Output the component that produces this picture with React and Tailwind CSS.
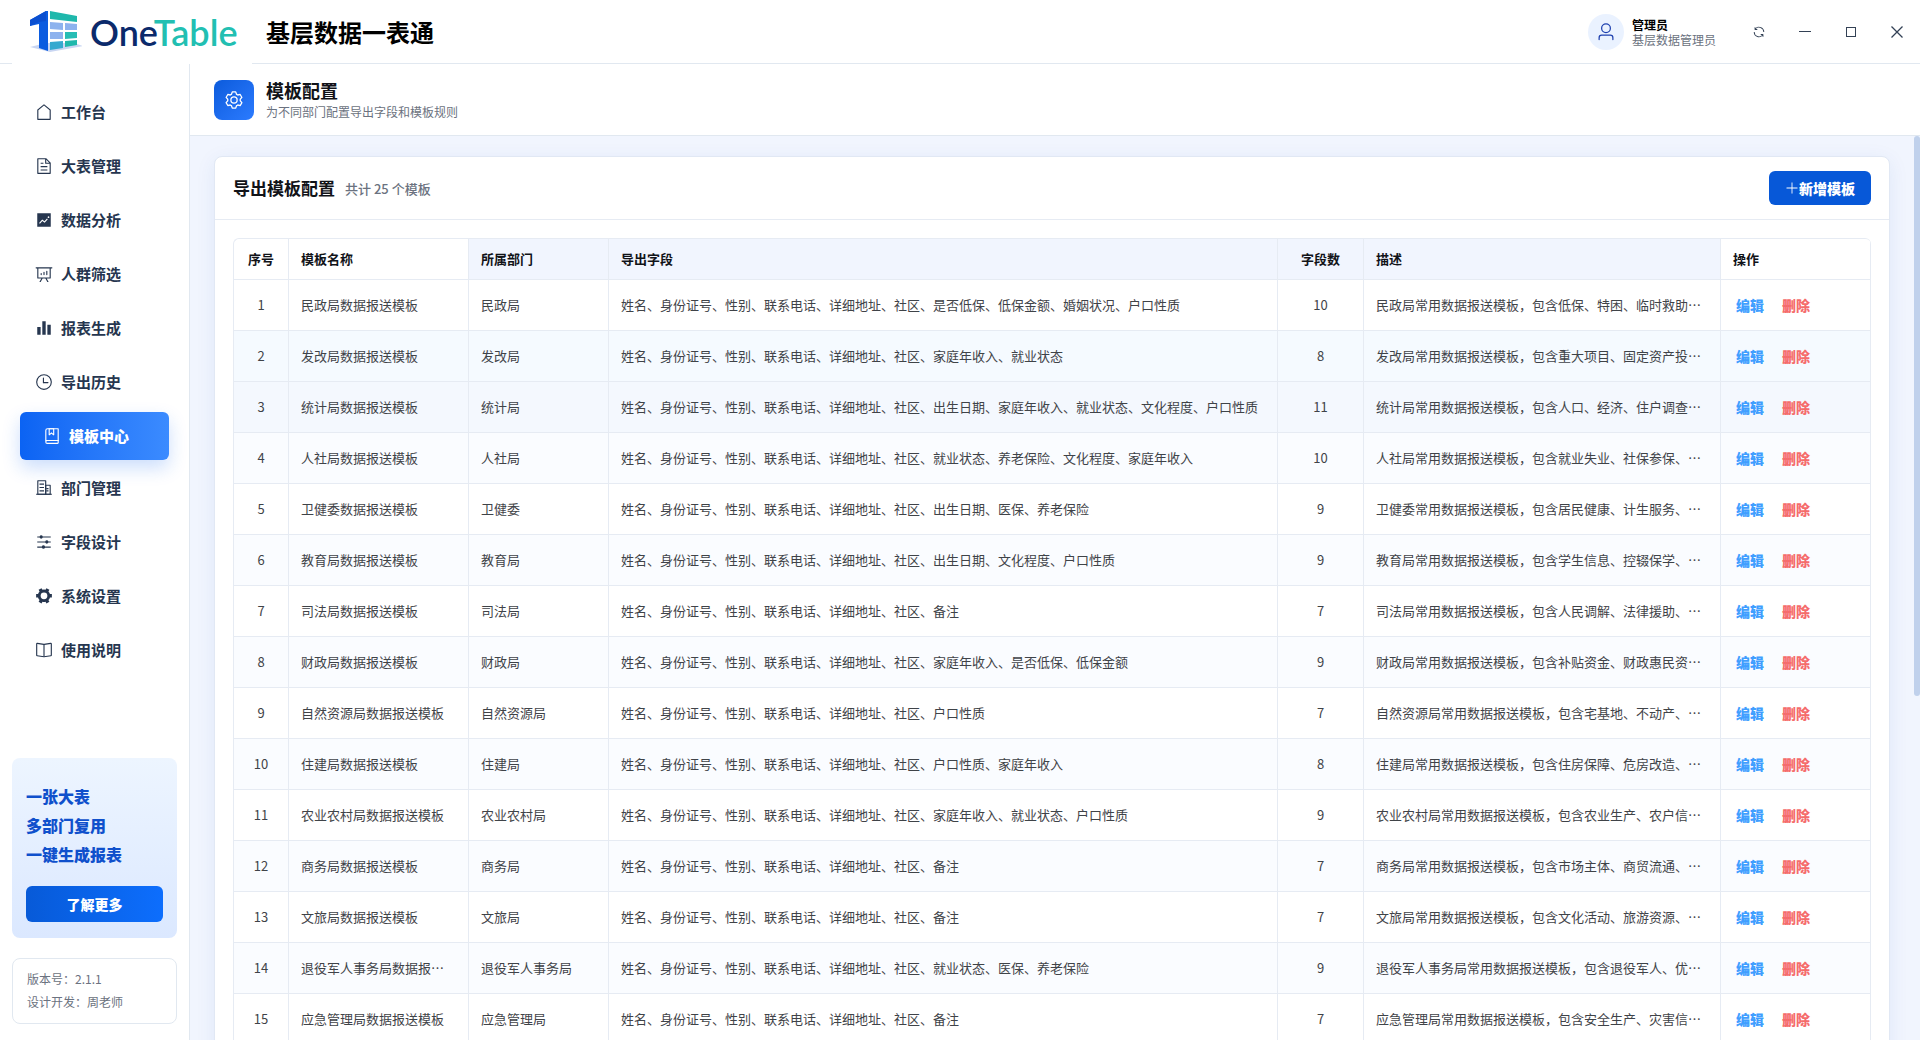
import { useState } from "react";

const icons = {
  house: [
    "M192 413.952V896h640V413.952L512 147.328zM139.52 374.4l352-293.312a32 32 0 0 1 40.96 0l352 293.312A32 32 0 0 1 896 398.976V928a32 32 0 0 1-32 32H160a32 32 0 0 1-32-32V398.976a32 32 0 0 1 11.52-24.576z",
  ],
  document: [
    "M832 384H576V128H192v768h640zm-26.496-64L640 154.496V320zM160 64h480l256 256v608a32 32 0 0 1-32 32H160a32 32 0 0 1-32-32V96a32 32 0 0 1 32-32m160 448h384v64H320zm0-192h160v64H320zm0 384h384v64H320z",
  ],
  trend: [
    "M128 896V128h768v768zm291.712-327.296 128 102.4 180.16-201.792-47.744-42.624-139.84 156.608-128-102.4-180.16 201.792 47.744 42.624 139.84-156.608zM816 352a48 48 0 1 0-96 0 48 48 0 0 0 96 0",
  ],
  board: [
    "m665.216 768 110.848 192h-73.856L591.36 768H433.024L322.176 960H248.32l110.848-192H160a32 32 0 0 1-32-32V192H64a32 32 0 0 1 0-64h896a32 32 0 1 1 0 64h-64v544a32 32 0 0 1-32 32zM832 192H192v512h640zM352 448a32 32 0 0 1 32 32v64a32 32 0 0 1-64 0v-64a32 32 0 0 1 32-32m160-64a32 32 0 0 1 32 32v128a32 32 0 0 1-64 0V416a32 32 0 0 1 32-32m160-64a32 32 0 0 1 32 32v192a32 32 0 1 1-64 0V352a32 32 0 0 1 32-32",
  ],
  histogram: ["M416 896V128h192v768zm-288 0V448h192v448zm576 0V320h192v576z"],
  clock: [
    "M512 896a384 384 0 1 0 0-768 384 384 0 0 0 0 768m0 64a448 448 0 1 1 0-896 448 448 0 0 1 0 896",
    "M480 256a32 32 0 0 1 32 32v256a32 32 0 0 1-64 0V288a32 32 0 0 1 32-32",
    "M480 512h256q32 0 32 32t-32 32H480q-32 0-32-32t32-32",
  ],
  collection: [
    "M192 736h640V128H256a64 64 0 0 0-64 64zm64-672h608a32 32 0 0 1 32 32v672a32 32 0 0 1-32 32H160l-32 57.536V192A128 128 0 0 1 256 64",
    "M240 800a48 48 0 1 0 0 96h592v-96zm0-64h656v160a64 64 0 0 1-64 64H240a112 112 0 0 1 0-224m144-608v250.88l96-76.8 96 76.8V128zm-64-64h320v381.44a32 32 0 0 1-51.968 24.96L480 384l-108.032 86.4A32 32 0 0 1 320 445.44z",
  ],
  office: [
    "M192 128v704h384V128zm-32-64h448a32 32 0 0 1 32 32v768a32 32 0 0 1-32 32H160a32 32 0 0 1-32-32V96a32 32 0 0 1 32-32",
    "M256 256h256v64H256zm0 192h256v64H256zm0 192h256v64H256zm384-128h128v64H640zm0 128h128v64H640zM64 832h896v64H64z",
    "M640 384v448h192V384zm-32-64h256a32 32 0 0 1 32 32v512a32 32 0 0 1-32 32H608a32 32 0 0 1-32-32V352a32 32 0 0 1 32-32",
  ],
  operation: [
    "M389.44 768a96.064 96.064 0 0 1 181.12 0H896v64H570.56a96.064 96.064 0 0 1-181.12 0H128v-64zm192-288a96.064 96.064 0 0 1 181.12 0H896v64H762.56a96.064 96.064 0 0 1-181.12 0H128v-64zm-320-288a96.064 96.064 0 0 1 181.12 0H896v64H442.56a96.064 96.064 0 0 1-181.12 0H128v-64z",
  ],
  tools: [
    "M764.416 254.72a351.68 351.68 0 0 1 86.336 149.184H960v192.064H850.752a351.68 351.68 0 0 1-86.336 149.312l54.72 94.72-166.272 96-54.592-94.72a352.64 352.64 0 0 1-172.48 0L371.136 936l-166.272-96 54.72-94.72a351.68 351.68 0 0 1-86.336-149.312H64v-192h109.248a351.68 351.68 0 0 1 86.336-149.312L204.8 160l166.208-96h.192l54.656 94.592a352.64 352.64 0 0 1 172.48 0L652.8 64h.128L819.2 160l-54.72 94.72zM704 499.968a192 192 0 1 0-384 0 192 192 0 0 0 384 0",
  ],
  reading: [
    "m512 863.36 384-54.848v-638.72L525.568 222.72a96 96 0 0 1-27.136 0L128 169.792v638.72zM137.024 106.432l370.432 52.928a32 32 0 0 0 9.088 0l370.432-52.928A64 64 0 0 1 960 169.792v638.72a64 64 0 0 1-54.976 63.36l-388.48 55.488a32 32 0 0 1-9.088 0l-388.48-55.488A64 64 0 0 1 64 808.512v-638.72a64 64 0 0 1 73.024-63.36",
    "M480 192h64v704h-64z",
  ],
  setting: [
    "M600.704 64a32 32 0 0 1 30.464 22.208l35.2 109.376c14.784 7.232 28.928 15.36 42.432 24.512l112.384-24.192a32 32 0 0 1 34.432 15.36L944.32 364.8a32 32 0 0 1-4.032 37.504l-77.12 85.12a357.12 357.12 0 0 1 0 49.024l77.12 85.248a32 32 0 0 1 4.032 37.504l-88.704 153.6a32 32 0 0 1-34.432 15.296L708.8 803.904c-13.44 9.088-27.648 17.28-42.368 24.512l-35.264 109.376A32 32 0 0 1 600.704 960H423.296a32 32 0 0 1-30.464-22.208L357.696 828.48a351.616 351.616 0 0 1-42.56-24.64l-112.32 24.256a32 32 0 0 1-34.432-15.36L79.68 659.2a32 32 0 0 1 4.032-37.504l77.12-85.248a357.12 357.12 0 0 1 0-48.896l-77.12-85.248A32 32 0 0 1 79.68 364.8l88.704-153.6a32 32 0 0 1 34.432-15.296l112.32 24.256c13.568-9.152 27.776-17.408 42.56-24.64l35.2-109.312A32 32 0 0 1 423.232 64H600.64zm-23.424 64H446.72l-36.352 113.088-24.512 11.968a294.113 294.113 0 0 0-34.816 20.096l-22.656 15.36-116.224-25.088-65.28 113.152 79.68 88.192-1.92 27.136a293.12 293.12 0 0 0 0 40.192l1.92 27.136-79.808 88.192 65.344 113.152 116.224-25.024 22.656 15.296a294.113 294.113 0 0 0 34.816 20.096l24.512 11.968L446.72 896h130.688l36.48-113.152 24.448-11.904a288.282 288.282 0 0 0 34.752-20.096l22.592-15.296 116.288 25.024 65.28-113.152-79.744-88.192 1.92-27.136a293.12 293.12 0 0 0 0-40.256l-1.92-27.136 79.808-88.128-65.344-113.152-116.288 24.96-22.592-15.232a287.616 287.616 0 0 0-34.752-20.096l-24.448-11.904L577.344 128zM512 320a192 192 0 1 1 0 384 192 192 0 0 1 0-384m0 64a128 128 0 1 0 0 256 128 128 0 0 0 0-256",
  ],
  user: [
    "M512 512a192 192 0 1 0 0-384 192 192 0 0 0 0 384m0 64a256 256 0 1 1 0-512 256 256 0 0 1 0 512m320 320v-96a96 96 0 0 0-96-96H288a96 96 0 0 0-96 96v96a32 32 0 1 1-64 0v-96a160 160 0 0 1 160-160h448a160 160 0 0 1 160 160v96a32 32 0 1 1-64 0",
  ],
  refresh: [
    "M771.776 794.88A384 384 0 0 1 128 512h64a320 320 0 0 0 555.712 216.448H654.72a32 32 0 1 1 0-64h149.056a32 32 0 0 1 32 32v148.928a32 32 0 1 1-64 0v-50.56zM276.288 295.616h92.992a32 32 0 0 1 0 64H220.16a32 32 0 0 1-32-32V178.56a32 32 0 0 1 64 0v50.56A384 384 0 0 1 896.128 512h-64a320 320 0 0 0-555.776-216.384z",
  ],
  plus: [
    "M480 480V128a32 32 0 0 1 64 0v352h352a32 32 0 1 1 0 64H544v352a32 32 0 1 1-64 0V544H128a32 32 0 0 1 0-64z",
  ],
};

const menu = [
  { name: "工作台", icon: "house" },
  { name: "大表管理", icon: "document" },
  { name: "数据分析", icon: "trend" },
  { name: "人群筛选", icon: "board" },
  { name: "报表生成", icon: "histogram" },
  { name: "导出历史", icon: "clock" },
  { name: "模板中心", icon: "collection" },
  { name: "部门管理", icon: "office" },
  { name: "字段设计", icon: "operation" },
  { name: "系统设置", icon: "tools" },
  { name: "使用说明", icon: "reading" },
];

const baseFields = "姓名、身份证号、性别、联系电话、详细地址、社区、";

// dept, extra fields, field count, what the description lists
const templates = [
  ["民政局", "是否低保、低保金额、婚姻状况、户口性质", 10, "低保、特困、临时救助信息"],
  ["发改局", "家庭年收入、就业状态", 8, "重大项目、固定资产投资等"],
  ["统计局", "出生日期、家庭年收入、就业状态、文化程度、户口性质", 11, "人口、经济、住户调查数据"],
  ["人社局", "就业状态、养老保险、文化程度、家庭年收入", 10, "就业失业、社保参保、培训"],
  ["卫健委", "出生日期、医保、养老保险", 9, "居民健康、计生服务、慢病"],
  ["教育局", "出生日期、文化程度、户口性质", 9, "学生信息、控辍保学、资助"],
  ["司法局", "备注", 7, "人民调解、法律援助、矫正"],
  ["财政局", "家庭年收入、是否低保、低保金额", 9, "补贴资金、财政惠民资金等"],
  ["自然资源局", "户口性质", 7, "宅基地、不动产、耕地"],
  ["住建局", "户口性质、家庭年收入", 8, "住房保障、危房改造、物业"],
  ["农业农村局", "家庭年收入、就业状态、户口性质", 9, "农业生产、农户信息等"],
  ["商务局", "备注", 7, "市场主体、商贸流通、电商"],
  ["文旅局", "备注", 7, "文化活动、旅游资源、文物"],
  ["退役军人事务局", "就业状态、医保、养老保险", 9, "退役军人、优抚对象"],
  ["应急管理局", "备注", 7, "安全生产、灾害信息等"],
];

const Icon = ({ name, className }) => (
  <svg viewBox="0 0 1024 1024" fill="currentColor" className={className} aria-hidden="true">
    {icons[name].map((d) => (
      <path key={d} d={d} />
    ))}
  </svg>
);

const Logo = () => (
  <div className="relative z-10 -mb-px ml-3 flex h-16 w-60 items-center bg-white pl-4">
    <svg viewBox="0 0 54 44" className="h-11 w-[54px]" aria-hidden="true">
      <path d="M2 37 18 33H46L55 36 22 42z" fill="#c9d6f2" />
      <path d="M2 10 18 1 20 1V41L11 38V14L2 16z" fill="#0b5ce0" />
      <path d="M2 10 18 1V11L11 12 2 16z" fill="#0a4fd0" />
      <path d="M22 1 49 6V12L22 9z" fill="#1fb8ac" />
      <path d="M22 12 35 13V20L22 19z" fill="#8db2ee" />
      <path d="M37 13 49 14V20H37z" fill="#8db2ee" />
      <path d="M22 22H35V29H22z" fill="#8db2ee" />
      <path d="M37 22H49V28L37 29z" fill="#27bdb4" />
      <path d="M22 32 35 31V38L22 40z" fill="#35a9cf" />
      <path d="M37 31 49 30V35L37 37z" fill="#1fb8ac" />
    </svg>
    <span className="ml-2 font-['Lato',sans-serif] text-[36px] leading-none font-semibold text-[#0b2a6b]">
      One<span className="text-[#22bfb2]">Table</span>
    </span>
  </div>
);

const TopBar = () => (
  <header className="flex h-16 shrink-0 items-center border-b border-[#e1e8f0] bg-white">
    <Logo />
    <h1 className="ml-3.5 text-2xl font-bold text-black">基层数据一表通</h1>
    <div className="ml-auto flex items-center">
      <span className="flex size-9 items-center justify-center rounded-full bg-[#eaf2ff] text-[#1e40af]">
        <Icon name="user" className="size-5" />
      </span>
      <div className="mr-5 ml-2 text-xs leading-[15px]">
        <div className="font-bold text-black">管理员</div>
        <div className="text-[#6b7280]">基层数据管理员</div>
      </div>
      <button aria-label="刷新" className="flex h-8 w-[46px] items-center justify-center text-[#334155]">
        <Icon name="refresh" className="size-3.5" />
      </button>
      <button aria-label="最小化" className="flex h-8 w-[46px] items-center justify-center">
        <span className="h-px w-3 bg-[#334155]" />
      </button>
      <button aria-label="最大化" className="flex h-8 w-[46px] items-center justify-center">
        <span className="size-2.5 border border-[#334155]" />
      </button>
      <button aria-label="关闭" className="flex h-8 w-[46px] items-center justify-center text-[#334155]">
        <svg viewBox="0 0 12 12" className="size-3" stroke="currentColor" strokeWidth="1.3" aria-hidden="true">
          <path d="M.5.5l11 11M11.5.5l-11 11" />
        </svg>
      </button>
    </div>
  </header>
);

const Sidebar = ({ current, onSelect }) => (
  <aside className="flex w-[190px] shrink-0 flex-col border-r border-[#e1e8f0] bg-white pb-4">
    <nav className="flex flex-col pt-[21px]">
      {menu.map((item) => (
        <a
          key={item.name}
          href="#"
          onClick={() => onSelect(item.name)}
          className={
            item.name === current
              ? "mx-5 mt-[3px] mb-px flex h-12 items-center rounded-md bg-linear-to-r from-[#0b63f3] to-[#3b8bff] pl-5 text-[15px] font-black text-white shadow-[0_8px_18px_rgba(22,104,240,0.22)]"
              : "mx-5 flex h-[54px] items-center pl-3 text-[15px] font-bold text-[#26364f]"
          }
        >
          <span className="mr-[5px] flex w-6 justify-center">
            <Icon name={item.icon} className="size-[18px]" />
          </span>
          {item.name}
        </a>
      ))}
    </nav>
    <div className="mx-3 mt-auto rounded-lg bg-linear-to-b from-[#edf5ff] to-[#dbe8ff] px-3.5 pt-6 pb-4">
      <p className="text-base leading-[29px] font-black text-[#0f50cc]">
        一张大表
        <br />
        多部门复用
        <br />
        一键生成报表
      </p>
      <button className="mt-[17px] h-9 w-full rounded-md bg-linear-to-r from-[#075ad8] to-[#0d6efd] text-sm font-black text-white">
        了解更多
      </button>
    </div>
    <div className="mx-3 mt-5 rounded-lg border border-[#e1e8f0] px-3.5 pt-2 pb-2.5 text-xs leading-[23px] text-[#6b7280]">
      <div>版本号：2.1.1</div>
      <div>设计开发：周老师</div>
    </div>
  </aside>
);

const rowColor = (i) => {
  if (i === 1) return "bg-[#f5faff]";
  if (i === 2) return "bg-[#f4f8fe]";
  return i % 2 ? "bg-[#fafcff]" : "bg-white";
};

const th = "border-r border-b border-[#e6ebf3] px-3 text-left font-bold";
const td = "truncate border-r border-b border-[#e6ebf3] px-3";

const TemplateTable = () => (
  <div className="overflow-hidden rounded-md border-t border-l border-[#e6ebf3]">
    <table className="w-full table-fixed border-separate border-spacing-0 text-[13px] text-[#3f4348]">
      <colgroup>
        <col className="w-[55px]" />
        <col className="w-[180px]" />
        <col className="w-[140px]" />
        <col />
        <col className="w-[86px]" />
        <col className="w-[357px]" />
        <col className="w-[150px]" />
      </colgroup>
      <thead>
        <tr className="h-[41px] text-[#111318]">
          <th className="border-r border-b border-[#e6ebf3] text-center font-bold">序号</th>
          <th className={th}>模板名称</th>
          <th className={`${th} bg-[#f1f5fe]`}>所属部门</th>
          <th className={`${th} bg-[#f1f5fe]`}>导出字段</th>
          <th className="border-r border-b border-[#e6ebf3] bg-[#f1f5fe] text-center font-bold">字段数</th>
          <th className={`${th} bg-[#f1f5fe]`}>描述</th>
          <th className={th}>操作</th>
        </tr>
      </thead>
      <tbody>
        {templates.map(([dept, fields, count, desc], i) => (
          <tr key={dept} className={`h-[51px] ${rowColor(i)}`}>
            <td className="border-r border-b border-[#e6ebf3] text-center">{i + 1}</td>
            <td className={td}>{`${dept}数据报送模板`}</td>
            <td className={td}>{dept}</td>
            <td className={td}>{baseFields + fields}</td>
            <td className="border-r border-b border-[#e6ebf3] text-center">{count}</td>
            <td className={td}>{`${dept}常用数据报送模板，包含${desc}`}</td>
            <td className="border-r border-b border-[#e6ebf3] px-[15px] text-sm">
              <button className="mr-[18px] font-black text-[#409eff]">编辑</button>
              <button className="font-black text-[#f56c6c]">删除</button>
            </td>
          </tr>
        ))}
      </tbody>
    </table>
  </div>
);

const App = () => {
  const [current, setCurrent] = useState("模板中心");

  return (
    <div className="flex h-screen flex-col overflow-hidden bg-white font-['Noto_Sans_CJK_SC',sans-serif]">
      <TopBar />
      <div className="flex min-h-0 flex-1">
        <Sidebar current={current} onSelect={setCurrent} />
        <main className="flex min-w-0 flex-1 flex-col">
          <div className="flex h-[72px] shrink-0 items-center border-b border-[#e1e8f0] px-6">
            <span className="flex size-10 items-center justify-center rounded-lg bg-linear-to-br from-[#0b5bdc] to-[#2b7bff] text-white">
              <Icon name="setting" className="size-5" />
            </span>
            <div className="ml-3 pt-0.5">
              <h2 className="text-lg leading-[22px] font-bold text-[#111318]">模板配置</h2>
              <p className="text-xs leading-[22px] text-[#6b7280]">为不同部门配置导出字段和模板规则</p>
            </div>
          </div>
          <div className="relative min-h-0 flex-1 overflow-hidden bg-[#f1f5fe] py-5 pr-[30px] pl-6">
            <section className="rounded-lg border border-[#e1e8f4] bg-white shadow-[0_4px_20px_rgba(30,80,180,0.08)]">
              <div className="flex h-[63px] items-center border-b border-[#e6ebf3] px-[18px]">
                <h3 className="text-[17px] font-bold text-[#111318]">导出模板配置</h3>
                <span className="ml-2.5 pt-0.5 text-[13px] font-medium text-[#6b7280]">共计 25 个模板</span>
                <button className="ml-auto flex h-[34px] items-center rounded-md bg-[#0758d8] px-4 text-sm font-black text-white">
                  <Icon name="plus" className="size-3.5" />
                  新增模板
                </button>
              </div>
              <div className="p-[18px]">
                <TemplateTable />
              </div>
            </section>
            <div className="absolute top-0 right-0 h-[62%] w-1.5 rounded-full bg-[#c0d1ec]" />
          </div>
        </main>
      </div>
    </div>
  );
};

export default App;
